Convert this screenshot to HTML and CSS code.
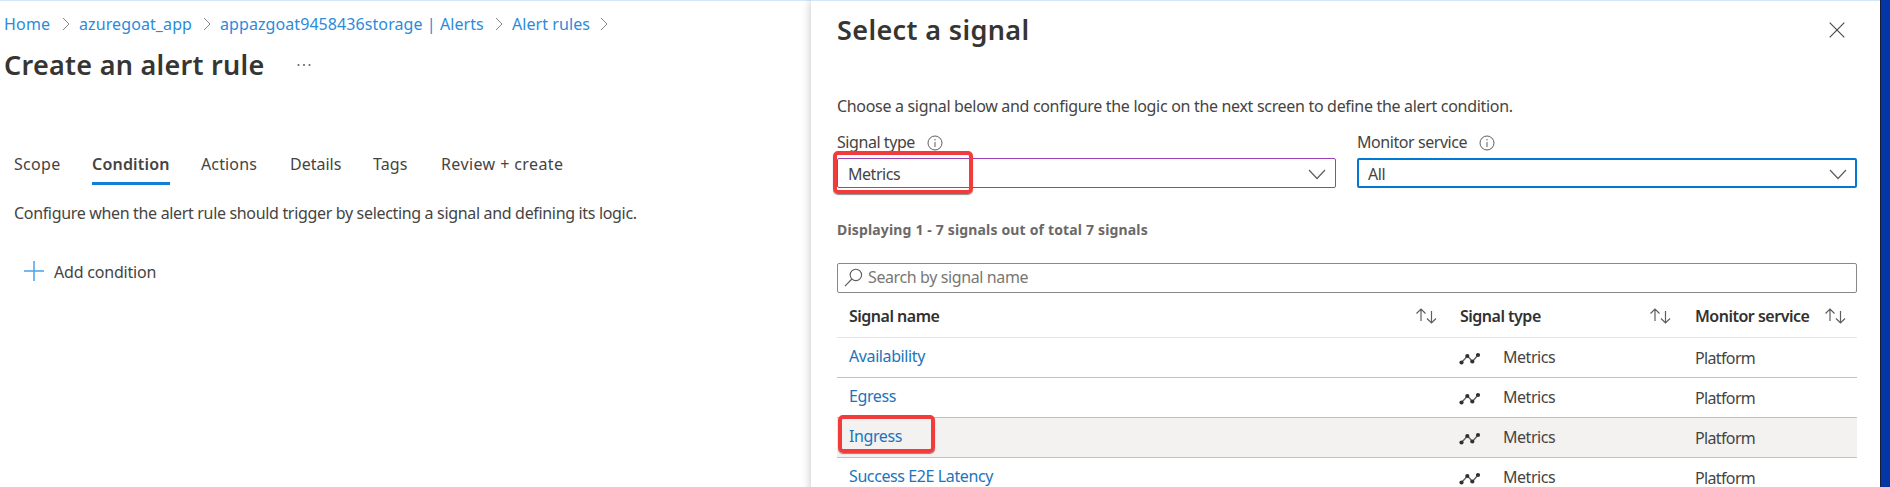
FILE: index.html
```html
<!DOCTYPE html>
<html lang="en">
<head>
<meta charset="utf-8">
<title>Create an alert rule</title>
<link rel="stylesheet" href="styles.css">
</head>
<body>
<svg class="defs" aria-hidden="true">
  <symbol id="crumb" viewBox="0 0 8 14"><path d="M1 1l6 6-6 6"/></symbol>
  <symbol id="down" viewBox="0 0 18 11"><path d="M1 1l8 8.500 8-8.500"/></symbol>
  <symbol id="info" viewBox="0 0 16 16"><circle cx="8" cy="8" r="7"/><path d="M8 7v5M8 4v1.500"/></symbol>
  <symbol id="sort" viewBox="0 0 22 17"><path d="M6 14V2M1.500 6.500L6 2l4.500 4.500M16.500 4v12M12 11.500l4.500 4.500 4.500-4.500"/></symbol>
  <symbol id="trend" viewBox="0 0 22 14"><path d="M2.500 11.500L8.500 5l5 5.500L19 4"/><g><circle cx="2.500" cy="11.500" r="2.100"/><circle cx="8.300" cy="5" r="2.100"/><circle cx="13.300" cy="10.500" r="2.100"/><circle cx="19" cy="4" r="2.100"/></g></symbol>
</svg>
<div class="page">
  <main class="blade">
    <nav class="crumbs">
      <a class="c1">Home</a><svg class="crumb"><use href="#crumb"/></svg>
      <a class="c2">azuregoat_app</a><svg class="crumb"><use href="#crumb"/></svg>
      <a class="c3">appazgoat9458436storage | Alerts</a><svg class="crumb"><use href="#crumb"/></svg>
      <a class="c4">Alert rules</a><svg class="crumb"><use href="#crumb"/></svg>
    </nav>
    <div class="heading"><h1>Create an alert rule</h1><svg class="dots" viewBox="0 0 14 4"><circle cx="1.500" cy="2" r="1"/><circle cx="7" cy="2" r="1"/><circle cx="12.500" cy="2" r="1"/></svg></div>
    <div class="tabs">
      <span class="tab t1">Scope</span><span class="tab t2 active">Condition</span><span class="tab t3">Actions</span><span class="tab t4">Details</span><span class="tab t5">Tags</span><span class="tab t6">Review + create</span>
    </div>
    <p class="intro">Configure when the alert rule should trigger by selecting a signal and defining its logic.</p>
    <div class="add"><svg class="plus" viewBox="0 0 20 20"><path d="M10 0v20M0 10h20"/></svg><span>Add condition</span></div>
  </main>
  <aside class="panel">
    <div class="panel-head"><h2>Select a signal</h2><svg class="close" viewBox="0 0 16 16"><path d="M.7.7l14.600 14.600M15.300.7L.7 15.300"/></svg></div>
    <p class="lead">Choose a signal below and configure the logic on the next screen to define the alert condition.</p>
    <div class="filters">
      <div class="field">
        <div class="label"><span>Signal type</span><svg class="info"><use href="#info"/></svg></div>
        <div class="select visited"><span>Metrics</span><svg class="down"><use href="#down"/></svg><i class="mark mark-type"></i></div>
      </div>
      <div class="field">
        <div class="label"><span>Monitor service</span><svg class="info"><use href="#info"/></svg></div>
        <div class="select focus"><span>All</span><svg class="down"><use href="#down"/></svg></div>
      </div>
    </div>
    <p class="count">Displaying 1 - 7 signals out of total 7 signals</p>
    <div class="search"><svg class="glass" viewBox="0 0 20 20"><circle cx="12.500" cy="7.300" r="6"/><path d="M8.300 11.600L1 19"/></svg><span>Search by signal name</span></div>
    <div class="table">
      <div class="row head">
        <div class="name"><span>Signal name</span><svg class="sort"><use href="#sort"/></svg></div>
        <div class="type"><span>Signal type</span><svg class="sort"><use href="#sort"/></svg></div>
        <div class="service"><span>Monitor service</span><svg class="sort"><use href="#sort"/></svg></div>
      </div>
      <div class="row"><a class="name">Availability</a><div class="type"><svg class="trend"><use href="#trend"/></svg><span>Metrics</span></div><div class="service">Platform</div></div>
      <div class="row"><a class="name">Egress</a><div class="type"><svg class="trend"><use href="#trend"/></svg><span>Metrics</span></div><div class="service">Platform</div></div>
      <div class="row hover"><a class="name">Ingress</a><div class="type"><svg class="trend"><use href="#trend"/></svg><span>Metrics</span></div><div class="service">Platform</div><i class="mark mark-row"></i></div>
      <div class="row"><a class="name">Success E2E Latency</a><div class="type"><svg class="trend"><use href="#trend"/></svg><span>Metrics</span></div><div class="service">Platform</div></div>
    </div>
  </aside>
  <div class="desktop"></div>
</div>
</body>
</html>
```
FILE: styles.css
```css
* { box-sizing: border-box; }
body { margin: 0; overflow: hidden; background: #fff; color: #454443; font: 16px/20px "Noto Sans", "Open Sans", sans-serif; }
h1, h2, p { margin: 0; white-space: nowrap; }
h1, h2 { font-size: 27px; line-height: 36px; font-weight: 600; color: #363534; }
svg { display: block; flex: none; fill: none; stroke: #605e5c; stroke-width: 1.2; }
.defs { position: absolute; width: 0; height: 0; }
.page { display: grid; grid-template-columns: 811px 1069px 10px; height: 487px; overflow: hidden; }
.desktop { background: #0437a5; border-left: 1px solid #15203f; }

.blade { border-top: 1px solid #d3e7f8; padding-top: 13px; }
.crumbs { display: flex; align-items: center; height: 20px; padding-left: 4px; color: #2a8bdb; white-space: nowrap; }
.crumb { width: 8px; height: 14px; stroke: #8a8886; stroke-width: 1; margin: 0 9px 0 11px; }
.c1 { width: 47px; letter-spacing: .2px; }
.c2 { width: 113px; letter-spacing: .1px; }
.c3 { width: 264px; letter-spacing: .08px; }
.c4 { width: 77px; letter-spacing: .07px; }
.heading { display: flex; align-items: center; margin-top: 13px; padding-left: 4px; height: 36px; }
h1 { width: 293px; letter-spacing: .27px; }
.dots { width: 14px; height: 4px; fill: #605e5c; stroke: none; }
.tabs { display: flex; margin-top: 71px; padding-left: 14px; white-space: nowrap; }
.tab { height: 31px; }
.t1 { width: 47px; margin-right: 31px; letter-spacing: .3px; }
.t2 { width: 78px; margin-right: 31px; letter-spacing: .2px; }
.t3 { width: 57px; margin-right: 32px; letter-spacing: .14px; }
.t4 { width: 52px; margin-right: 31px; }
.t5 { width: 35px; margin-right: 33px; letter-spacing: .1px; }
.t6 { letter-spacing: .4px; }
.active { font-weight: 600; border-bottom: 3px solid #0f7fd7; }
.intro { margin-top: 18px; padding-left: 14px; letter-spacing: -.33px; }
.add { display: flex; align-items: center; margin-top: 39px; padding-left: 24px; letter-spacing: -.2px; }
.plus { width: 20px; height: 20px; margin: -3px 10px 0 0; stroke: #4aa3ec; stroke-width: 1.5; }

.panel { position: relative; background: #fff; border-top: 1px solid #d3e7f8; padding: 11px 23px 0 26px; box-shadow: 0 0 9px rgba(0, 0, 0, .24); clip-path: inset(0 0 0 -12px); }
.panel-head { display: flex; justify-content: space-between; align-items: center; height: 36px; }
h2 { letter-spacing: .37px; }
.close { width: 16px; height: 16px; margin-right: 12px; stroke: #4c4a48; }
.lead { margin-top: 48px; letter-spacing: -.315px; }
.filters { display: grid; grid-template-columns: 499px 500px; gap: 21px; margin-top: 16px; }
.label { display: flex; align-items: center; gap: 12px; height: 20px; letter-spacing: -.44px; }
.info { width: 16px; height: 16px; margin-top: 2px; stroke-width: 1; }
.select { position: relative; display: flex; justify-content: space-between; align-items: center; height: 30px; margin-top: 6px; padding: 2px 9px 0 10px; border: 1px solid #a24cba; border-radius: 2px; letter-spacing: -.46px; }
.focus { padding: 2px 8px 0 9px; border: 2px solid #0078d4; }
.visited { border-color: #9a3fb4; }
.down { width: 18px; height: 11px; }
.mark { position: absolute; border: 4px solid #f23b3b; border-radius: 5px; box-shadow: 0 1px 1px rgba(0, 0, 0, .45); }
.mark-type { left: -5px; top: -8px; width: 140px; height: 43px; }
.mark-row { left: 1px; top: -3px; width: 97px; height: 38px; }
.count { margin-top: 31px; font-size: 14px; font-weight: 700; color: #6b6967; letter-spacing: .16px; line-height: 22px; }
.search { display: flex; align-items: center; height: 30px; margin-top: 22px; padding: 0 6px 2px; gap: 5px; border: 1px solid #8a8886; border-radius: 2px; color: #797775; letter-spacing: -.39px; }
.glass { width: 19px; height: 19px; }
.row { position: relative; display: grid; grid-template-columns: 623px 235px 162px; height: 40px; border-bottom: 1px solid #c4c2c0; letter-spacing: -.46px; white-space: nowrap; }
.row .name { padding: 8px 0 0 12px; }
.row .type { display: flex; padding-top: 9px; }
.row .service { padding-top: 10px; letter-spacing: -.64px; }
a.name { color: #1b74bd; letter-spacing: -.4px; }
.trend { width: 22px; height: 14px; margin: 4px 22px 0 -1px; stroke-width: 1.3; fill: none; }
#trend g { fill: #323130; stroke: none; }
.head { height: 45px; font-weight: 600; color: #323130; border-color: #e6e5e4; }
.head .name, .head .type, .head .service { display: flex; justify-content: space-between; padding-top: 13px; padding-right: 23px; letter-spacing: -.5px; }
.head .type { padding-right: 24px; }
.head .service { padding-right: 11px; }
.sort { width: 22px; height: 17px; margin-top: 1px; }
.hover { background: #f3f2f1; }
```
